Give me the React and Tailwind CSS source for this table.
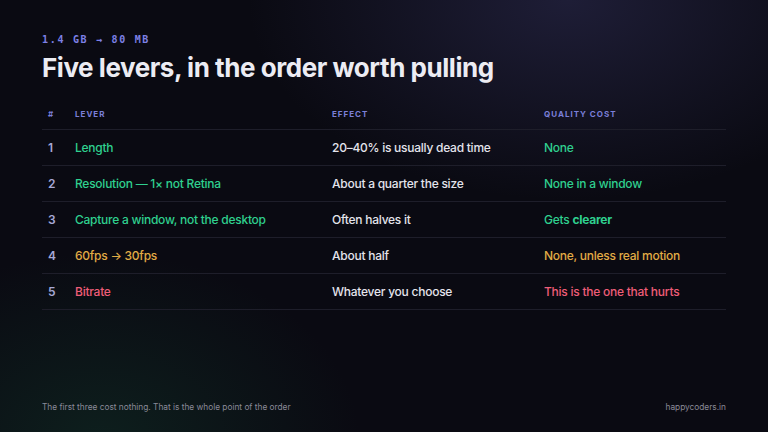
import React from "react";

const rows = [
  { n: "1", lever: "Length", effect: "20–40% is usually dead time", cost: "None", tone: "green" },
  { n: "2", lever: "Resolution — 1× not Retina", effect: "About a quarter the size", cost: "None in a window", tone: "green" },
  { n: "3", lever: "Capture a window, not the desktop", effect: "Often halves it", cost: "Gets clearer", tone: "green", bold: true },
  { n: "4", lever: "60fps → 30fps", effect: "About half", cost: "None, unless real motion", tone: "amber" },
  { n: "5", lever: "Bitrate", effect: "Whatever you choose", cost: "This is the one that hurts", tone: "red" },
];

const toneClass = {
  green: "text-[#2fd08f]",
  amber: "text-[#e2ac45]",
  red: "text-[#ef5d78]",
};

export default function App() {
  return (
    <div
      className="relative w-[768px] h-[432px] overflow-hidden bg-[#0a0a12] text-[#e6e6ee]"
      style={{ fontFamily: "Inter, 'Noto Sans', sans-serif" }}
    >
      {/* glows */}
      <div className="absolute -top-[200px] right-[-120px] w-[640px] h-[400px] rounded-full bg-[radial-gradient(closest-side,rgba(58,56,105,0.42),rgba(10,10,18,0))]" />
      <div className="absolute -bottom-[200px] -left-[160px] w-[520px] h-[380px] rounded-full bg-[radial-gradient(closest-side,rgba(20,70,50,0.35),rgba(10,10,18,0))]" />

      <div className="relative flex flex-col h-full px-[42px] pt-[34px] pb-[19px]">
        {/* Eyebrow */}
        <div className="font-['DejaVu_Sans_Mono',monospace] font-bold text-[10px] leading-[12px] tracking-[1.7px] text-[#7d80e6]">
          1.4 GB → 80 MB
        </div>
        {/* Title */}
        <h1 className="mt-[6px] text-[26px] leading-[32px] font-bold tracking-[-0.45px] text-[#ececf3]">
          Five levers, in the order worth pulling
        </h1>

        {/* Table */}
        <div className="mt-[21px] w-[684px]">
          <div className="flex items-center pt-[4px] pb-[10px] leading-[10px] border-b border-[#1e1e2a] text-[8px] font-bold tracking-[1px] text-[#7b7fd8] uppercase">
            <div className="w-[33px] pl-[6px]">#</div>
            <div className="w-[257px]">Lever</div>
            <div className="w-[212px]">Effect</div>
            <div>Quality cost</div>
          </div>
          {rows.map((r) => (
            <div key={r.n} className="flex items-center h-[36px] border-b border-[#1e1e2a] text-[12px] tracking-[-0.25px]">
              <div className="w-[33px] pl-[6px] text-[#a6a8d6] font-semibold">{r.n}</div>
              <div className={`w-[257px] font-medium ${toneClass[r.tone]}`}>{r.lever}</div>
              <div className="w-[212px] font-medium text-[#e4e4ec]">{r.effect}</div>
              <div className={`font-medium ${toneClass[r.tone]}`}>
                {r.bold ? (
                  <>Gets <span className="font-bold">clearer</span></>
                ) : (
                  r.cost
                )}
              </div>
            </div>
          ))}
        </div>

        {/* Footer */}
        <div className="mt-auto flex items-center justify-between w-[684px] text-[8.3px] text-[#8a8a98]">
          <span>The first three cost nothing. That is the whole point of the order</span>
          <span>happycoders.in</span>
        </div>
      </div>
    </div>
  );
}
